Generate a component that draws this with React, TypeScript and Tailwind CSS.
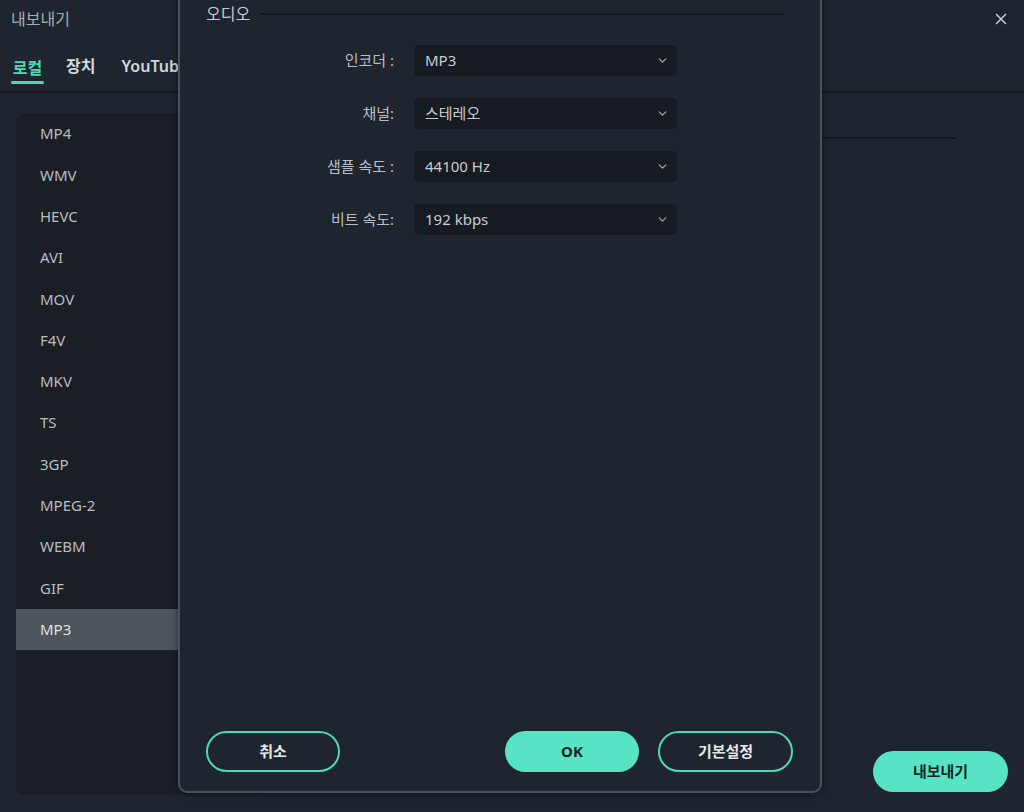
import { X, ChevronDown } from "lucide-react";

const formats = ["MP4", "WMV", "HEVC", "AVI", "MOV", "F4V", "MKV", "TS", "3GP", "MPEG-2", "WEBM", "GIF", "MP3"];

const fields = [
  { label: "인코더 :", value: "MP3" },
  { label: "채널:", value: "스테레오" },
  { label: "샘플 속도 :", value: "44100 Hz" },
  { label: "비트 속도:", value: "192 kbps" },
];

function SelectBox({ value }: { value: string }) {
  return (
    <div className="flex h-[31px] w-[263px] items-center justify-between rounded-[5px] bg-[#161b22] pl-[11px] pr-[8px] text-[15px] text-[#c8ccd1]">
      <span>{value}</span>
      <ChevronDown size={13} strokeWidth={2.5} className="text-[#9aa0a6]" />
    </div>
  );
}

function AudioDialog() {
  return (
    <div className="absolute left-[178px] top-[-20px] flex h-[813px] w-[644px] flex-col rounded-b-[9px] border-2 border-[#4a5058] bg-[#1f252e] pb-[19px] pl-[26px] pr-[27px] pt-[19px] shadow-[0_0_8px_rgba(0,0,0,0.45)]">
      <div className="flex items-center gap-[9px]">
        <span className="text-[16px] leading-[26px] text-[#c6cacf]">오디오</span>
        <div className="mr-[10px] h-[2px] flex-1 bg-[#14181d]" />
      </div>

      <div className="mt-[18px] flex flex-col gap-[22px]">
        {fields.map((f) => (
          <div key={f.label} className="flex items-center gap-[20px]">
            <span className="w-[188px] text-right text-[15px] text-[#babec3]">{f.label}</span>
            <SelectBox value={f.value} />
          </div>
        ))}
      </div>

      <div className="mt-auto flex items-center">
        <button className="h-[41px] w-[134px] rounded-full border-2 border-[#4fd8b6] text-[15px] font-bold text-[#e6e8ea]">
          취소
        </button>
        <button className="ml-auto h-[41px] w-[134px] rounded-full bg-[#56e4c5] text-[15px] font-bold text-[#1a1f26]">
          OK
        </button>
        <button className="ml-[19px] h-[41px] w-[135px] rounded-full border-2 border-[#4fd8b6] text-[15px] font-bold text-[#e6e8ea]">
          기본설정
        </button>
      </div>
    </div>
  );
}

export default function App() {
  return (
    <div
      className="relative flex h-[812px] w-[1024px] flex-col overflow-hidden bg-[#1f252e]"
      style={{ fontFamily: '"Noto Sans", "Noto Sans CJK KR", sans-serif' }}
    >
      <div className="flex h-[37px] items-center justify-between pl-[11px] pr-[14px]">
        <span className="text-[16px] text-[#a9adb2]">내보내기</span>
        <X size={18} strokeWidth={2} className="text-[#c8ccd0]" />
      </div>

      <div className="flex h-[56px] items-end border-b-2 border-[#14181d] pl-[11px]">
        <div className="flex flex-col items-center">
          <span className="text-[16px] font-semibold leading-[22px] text-[#4fd8b6]">로컬</span>
          <div className="mb-[7px] mt-[2px] h-[3px] w-[33px] rounded-full bg-[#4fd8b6]" />
        </div>
        <span className="mb-[14px] ml-[22px] text-[16px] font-semibold leading-[22px] text-[#d4d7db]">장치</span>
        <span className="mb-[14px] ml-[26px] text-[16px] font-semibold leading-[22px] text-[#d4d7db]">YouTube</span>
      </div>

      <div className="flex flex-1 gap-[16px] px-[16px] pb-[17px] pt-[20px]">
        <div className="w-[250px] overflow-hidden rounded-[9px] bg-[#1a1f26]">
          {formats.map((f) => (
            <div
              key={f}
              className={
                f === "MP3"
                  ? "flex h-[41.3px] items-center bg-[#4e555c] pl-[24px] text-[15px] text-[#dde0e3]"
                  : "flex h-[41.3px] items-center pl-[24px] text-[15px] text-[#b8bcc1]"
              }
            >
              {f}
            </div>
          ))}
        </div>
        <div className="flex flex-1 flex-col pr-[53px]">
          <div className="mt-[24px] h-[2px] bg-[#14181d]" />
        </div>
      </div>

      <button className="absolute bottom-[20px] right-[16px] h-[41px] w-[135px] rounded-full bg-[#56e4c5] text-[15px] font-bold text-[#1a1f26]">
        내보내기
      </button>

      <AudioDialog />
    </div>
  );
}
